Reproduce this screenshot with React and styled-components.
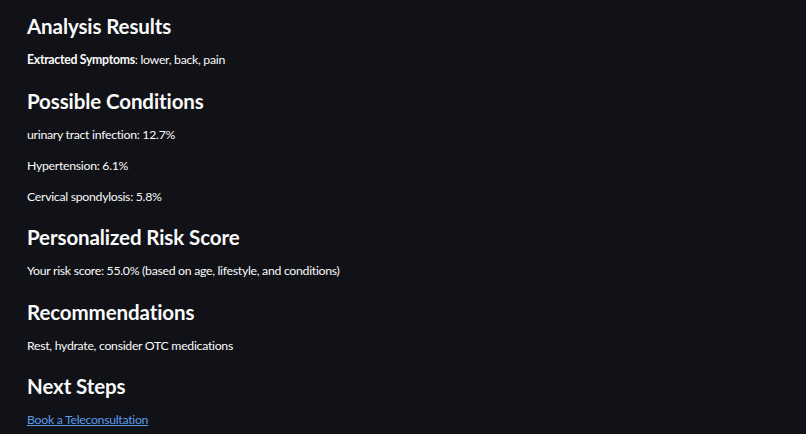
import React from 'react'
import styled, { createGlobalStyle } from 'styled-components'

const GlobalStyle = createGlobalStyle`
  html, body {
    margin: 0;
    padding: 0;
    background: #111217;
  }
  body {
    font-family: Lato, "Noto Sans", sans-serif;
    color: #fafafa;
  }
`;

const Page = styled.main`
  min-height: 434px;
  box-sizing: border-box;
  padding: 11px 27px 0;
  display: flex;
  flex-direction: column;
`;

const Heading = styled.h2`
  margin: 4.5px 0 9px;
  font-size: 20.5px;
  line-height: 30px;
  font-weight: 700;
  letter-spacing: -0.1px;
  &:first-child {
    margin-top: 0;
  }
`;

const Text = styled.p`
  margin: 0 0 11px;
  font-size: 12.3px;
  line-height: 20px;
  letter-spacing: -0.3px;
`;

const Strong = styled.strong`
  font-weight: 700;
`;

const Link = styled.a`
  color: #5b9bea;
  text-decoration: underline;
`;

const conditions = [
  { name: 'urinary tract infection', pct: '12.7%' },
  { name: 'Hypertension', pct: '6.1%' },
  { name: 'Cervical spondylosis', pct: '5.8%' },
];

export default function App() {
  return (
    <>
      <GlobalStyle />
      <Page>
        <Heading>Analysis Results</Heading>
        <Text><Strong>Extracted Symptoms</Strong>: lower, back, pain</Text>

        <Heading>Possible Conditions</Heading>
        {conditions.map((c) => (
          <Text key={c.name}>{c.name}: {c.pct}</Text>
        ))}

        <Heading>Personalized Risk Score</Heading>
        <Text>Your risk score: 55.0% (based on age, lifestyle, and conditions)</Text>

        <Heading>Recommendations</Heading>
        <Text>Rest, hydrate, consider OTC medications</Text>

        <Heading>Next Steps</Heading>
        <Text><Link href="#">Book a Teleconsultation</Link></Text>
      </Page>
    </>
  );
}
